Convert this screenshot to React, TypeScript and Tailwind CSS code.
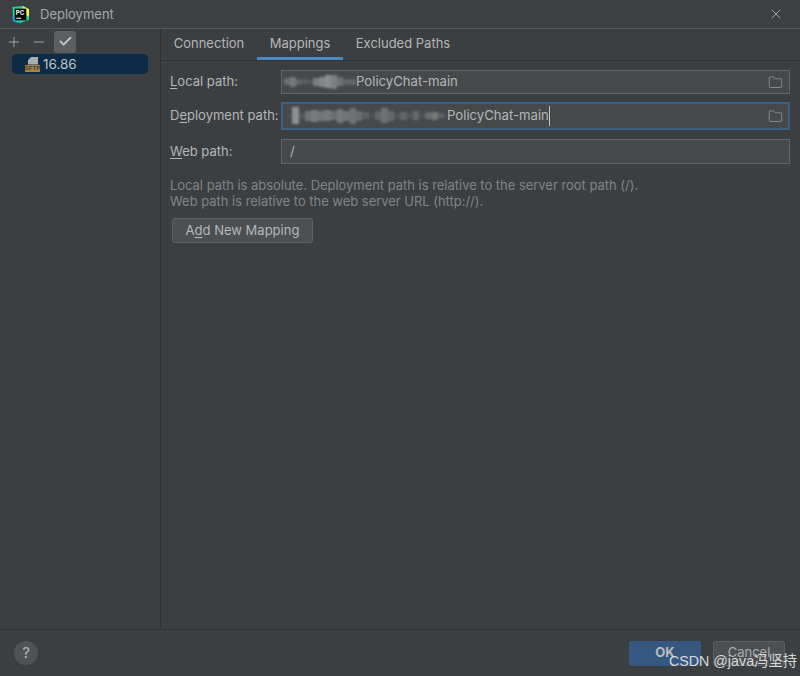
import { Check, Folder, Minus, Plus, X } from "lucide-react"

const font = "font-['Inter','Liberation_Sans',sans-serif]"

// mosaic over the redacted part of the paths: [width, height, colour]
const localBlur: [number, number, string][] = [
  [6, 7, "#6b6e6f"], [6, 10, "#77797a"], [5, 6, "#626566"], [6, 5, "#5c5f60"], [6, 4, "#55595a"],
  [6, 8, "#7b7d7e"], [6, 10, "#85878a"], [6, 13, "#8a8c8d"], [6, 14, "#7d7f80"], [6, 9, "#6f7273"], [13, 6, "#64676a"],
]
const deployBlur: [number, number, string][] = [
  [6, 3, "#4f5253"], [7, 17, "#8e9091"], [6, 6, "#55585a"], [6, 10, "#707374"], [7, 12, "#7a7c7d"], [6, 10, "#737576"],
  [7, 11, "#77797a"], [6, 9, "#6c6f70"], [6, 14, "#767879"], [7, 10, "#727475"], [6, 16, "#6f7172"], [6, 10, "#6a6d6e"],
  [7, 7, "#5e6162"], [6, 3, "#4e5152"], [6, 9, "#626566"], [7, 15, "#6e7172"], [6, 10, "#666969"], [6, 6, "#555859"],
  [7, 8, "#626566"], [6, 5, "#55585a"], [6, 9, "#666869"], [6, 3, "#505354"], [7, 7, "#696c6d"], [6, 8, "#777979"],
  [6, 5, "#606364"], [3, 3, "#4f5253"],
]

function Mosaic({ blocks }: { blocks: [number, number, string][] }) {
  return (
    <span className="flex items-center blur-[0.8px]">
      {blocks.map(([w, h, c], i) => (
        <span key={i} className="block" style={{ width: w, height: h, background: c }} />
      ))}
    </span>
  )
}

function PathLabel({ before, mnemonic, after }: { before?: string; mnemonic: string; after: string }) {
  return (
    <span className="w-[111px] shrink-0 whitespace-nowrap text-[13px] text-[#b4b6b8]">
      {before}
      <span className="underline underline-offset-2">{mnemonic}</span>
      {after}
    </span>
  )
}

function PcLogo() {
  return (
    <svg width="17" height="17" viewBox="0 0 16 16" className="shrink-0">
      <path d="M0.5 1 L10 0 L16 3 L16 13 L8 16 L1 14 Z" fill="#21d789" />
      <path d="M10 0 L16 3 L16 10 L11 6 Z" fill="#fcf84a" />
      <path d="M0.5 9 L1 14 L6 16 L8 12 Z" fill="#07c3f2" />
      <rect x="2.5" y="2.5" width="11" height="11" fill="#000" />
      <text x="3.6" y="8" fontSize="5.8" fontWeight="700" fill="#fff" fontFamily="Inter, sans-serif">PC</text>
      <rect x="4" y="11" width="4.5" height="1" fill="#fff" />
    </svg>
  )
}

function SftpIcon() {
  return (
    <span className="relative block h-[15px] w-[15px] shrink-0">
      <span className="absolute left-[3px] top-0 h-[8px] w-[10px] bg-[#a9adb0] [clip-path:polygon(35%_0,100%_0,100%_100%,0_100%,0_45%)]" />
      <span className="absolute bottom-0 left-0 flex h-[7px] w-[15px] items-center justify-center bg-[#a8843f] font-['Liberation_Sans',sans-serif] text-[6px] font-bold leading-none text-[#3c3f41]">
        SFTP
      </span>
    </span>
  )
}

export default function App() {
  return (
    <div className={`flex h-[676px] w-[800px] flex-col overflow-hidden bg-[#3c3f41] ${font}`}>
      {/* Title bar */}
      <div className="flex h-[29px] shrink-0 items-center border-b border-[#555758] bg-[#3d4043] pl-[12px] pr-[16px] pt-[1px]">
        <PcLogo />
        <span className="ml-[11px] pt-[1px] text-[13px] text-[#a5a7a9]">Deployment</span>
        <X className="ml-auto h-[16px] w-[16px] -translate-y-[1px] text-[#a9abad]" strokeWidth={1.4} />
      </div>

      <div className="flex min-h-0 flex-1">
        {/* Server list */}
        <div className="w-[161px] shrink-0 border-r border-[#323232]">
          <div className="flex h-[25px] items-center pl-[6px]">
            <Plus className="h-[16px] w-[16px] text-[#afb1b3]" strokeWidth={1.3} />
            <Minus className="ml-[9px] h-[16px] w-[16px] text-[#afb1b3]" strokeWidth={1.3} />
            <span className="ml-[7px] flex h-[22px] w-[22px] items-center justify-center rounded-[3px] bg-[#5c5f61]">
              <Check className="h-[15px] w-[15px] text-[#c4c6c8]" strokeWidth={3} />
            </span>
          </div>
          <div className="ml-[12px] flex h-[20px] w-[136px] items-center rounded-[4px] bg-[#0d2b45] pl-[13px]">
            <SftpIcon />
            <span className="ml-[3px] text-[13.5px] text-[#b9c4cc]">16.86</span>
          </div>
        </div>

        {/* Mappings form */}
        <div className="flex min-w-0 flex-1 flex-col">
          <div className="flex h-[32px] shrink-0 border-b border-[#323232] text-[13px] text-[#b4b6b8]">
            <span className="flex w-[96px] items-center justify-center pb-[2px]">Connection</span>
            <span className="flex w-[86px] items-center justify-center border-b-[3px] border-[#4a88c7] pt-[1px]">Mappings</span>
            <span className="flex w-[120px] items-center justify-center pb-[2px]">Excluded Paths</span>
          </div>

          <div className="flex flex-col pl-[9px] pr-[10px] pt-[9px]">
            <div className="flex h-[24px] items-center">
              <PathLabel mnemonic="L" after="ocal path:" />
              <div className="flex h-[24px] flex-1 items-center justify-between border border-[#646464] bg-[#45494a] pl-[2px] pr-[6px]">
                <span className="flex items-center text-[13.15px] text-[#b4b6b8]">
                  <Mosaic blocks={localBlur} />
                  <span>PolicyChat-main</span>
                </span>
                <Folder className="h-[15px] w-[15px] text-[#a4a6a8]" strokeWidth={1.1} />
              </div>
            </div>

            <div className="mt-[8px] flex h-[28px] items-center">
              <PathLabel before="D" mnemonic="e" after="ployment path:" />
              <div className="flex h-[28px] flex-1 items-center justify-between border-[2px] border-[#3d6185] bg-[#45494a] pl-[3px] pr-[5px]">
                <span className="flex items-center text-[13.15px] text-[#b4b6b8]">
                  <Mosaic blocks={deployBlur} />
                  <span className="border-r border-[#c4c6c8]">PolicyChat-main</span>
                </span>
                <Folder className="h-[15px] w-[15px] text-[#a4a6a8]" strokeWidth={1.1} />
              </div>
            </div>

            <div className="mt-[9px] flex h-[25px] items-center">
              <PathLabel mnemonic="W" after="eb path:" />
              <div className="flex h-[25px] flex-1 items-center border border-[#646464] bg-[#45494a] pl-[8px] text-[13px] text-[#b4b6b8]">
                /
              </div>
            </div>

            <p className="mt-[13px] text-[12.95px] leading-[16px] text-[#808486]">
              Local path is absolute. Deployment path is relative to the server root path (/).
              <br />
              Web path is relative to the web server URL (http://).
            </p>

            <button className="ml-[2px] mt-[9px] h-[25px] w-[141px] rounded-[3px] border border-[#5e6060] bg-[#4c5052] text-[13px] text-[#b4b6b8]">
              A<span className="underline underline-offset-2">d</span>d New Mapping
            </button>
          </div>
        </div>
      </div>

      {/* Footer */}
      <div className="relative flex h-[47px] shrink-0 items-center border-t border-[#323232] pl-[14px] pr-[15px]">
        <span className="flex h-[24px] w-[24px] items-center justify-center rounded-full bg-[#505356] text-[15px] text-[#b4b6b8]">?</span>
        <span className="ml-auto flex h-[25px] w-[72px] items-center justify-center rounded-[3px] bg-[#365880] text-[13px] font-bold text-[#b9bcbe]">OK</span>
        <span className="ml-[12px] flex h-[25px] w-[72px] items-center justify-center rounded-[3px] border border-[#5e6060] bg-[#4c5052] text-[13px] text-[#a9abad]">Cancel</span>
        <span className="absolute bottom-[6px] right-[3px] font-['Liberation_Sans','Noto_Sans_CJK_SC',sans-serif] text-[14.3px] leading-[18px] text-[#d8dadb]">
          CSDN @java冯坚持
        </span>
      </div>
    </div>
  )
}
